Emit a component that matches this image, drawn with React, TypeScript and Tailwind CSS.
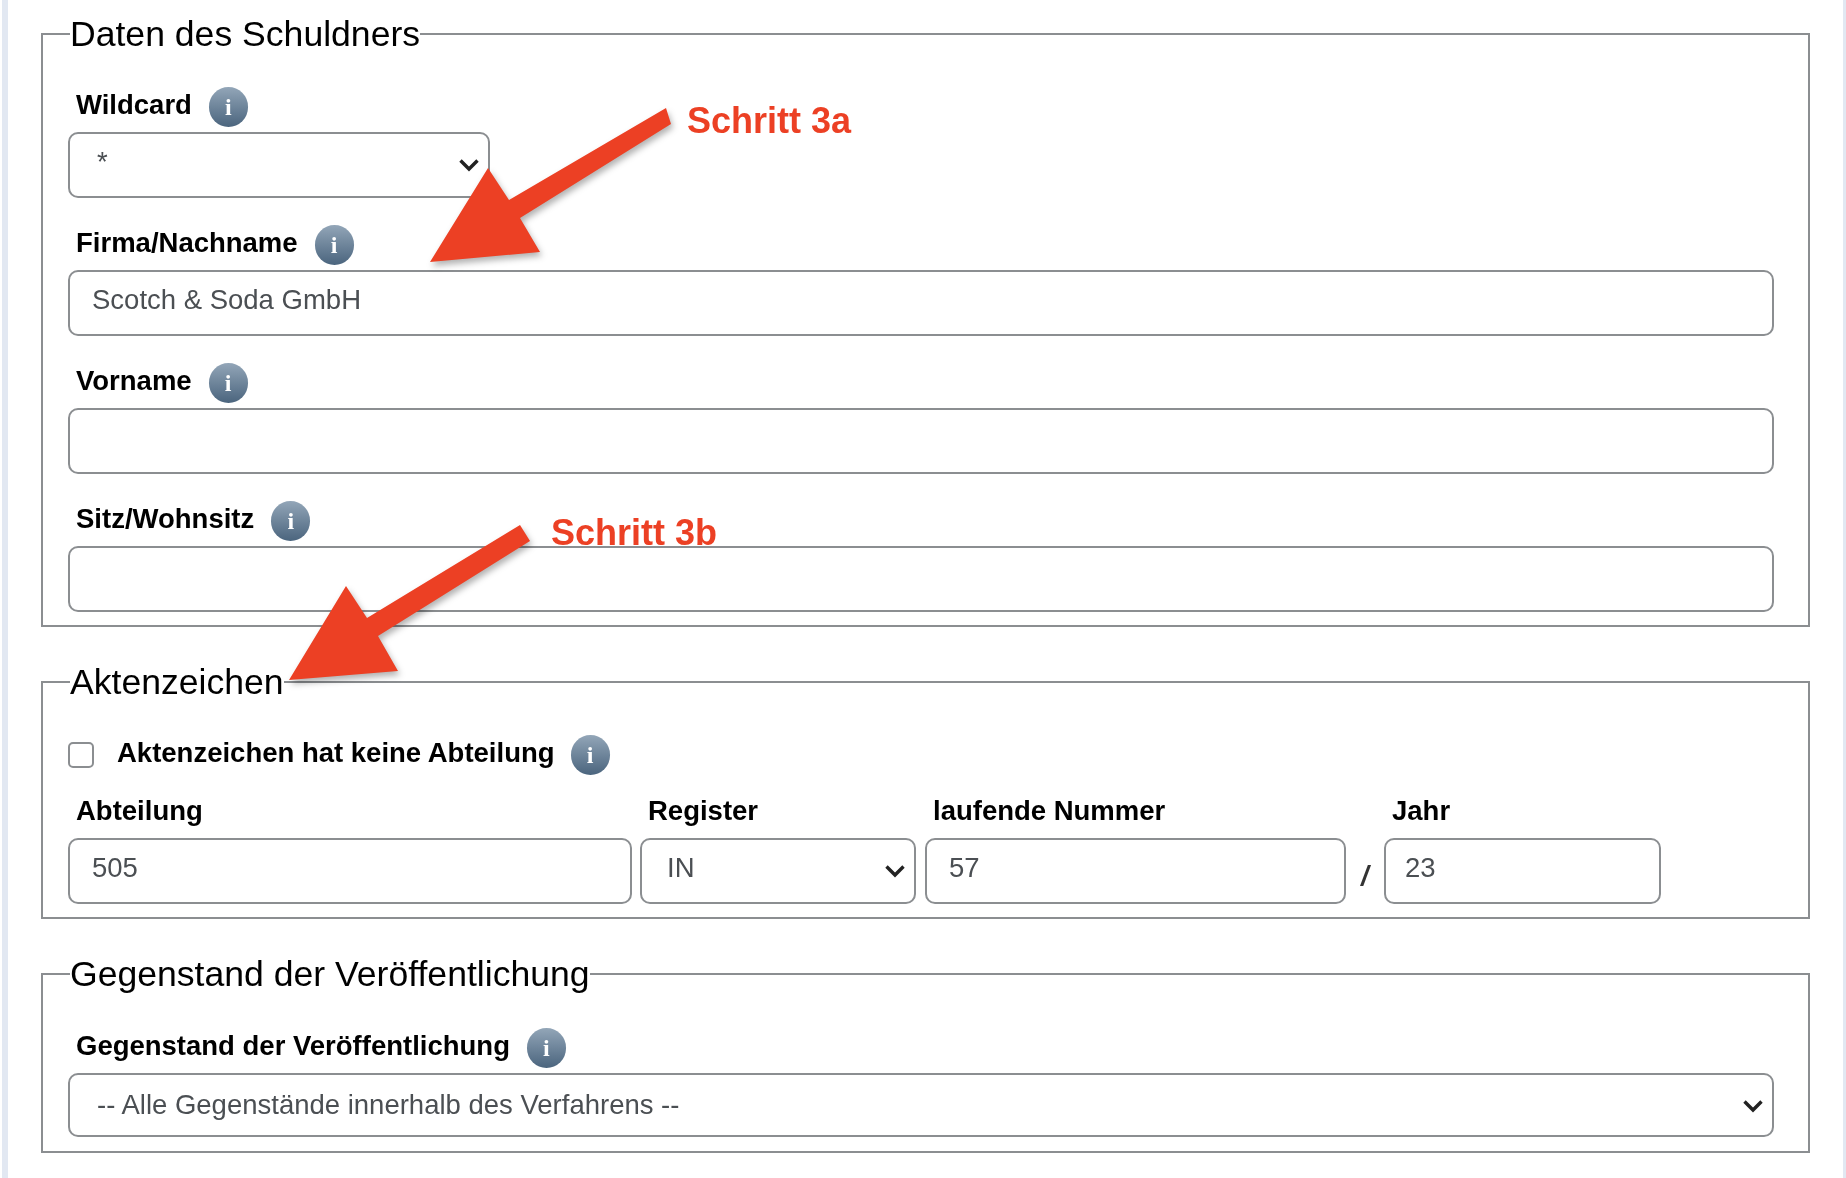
import type { ReactNode } from 'react';

const Info = () => (
  <span className="flex h-[40px] w-[39px] shrink-0 items-center justify-center rounded-full bg-gradient-to-b from-[#93a6b8] to-[#4b657e] font-['Liberation_Serif',serif] text-[24px] leading-none font-bold text-white">
    i
  </span>
);

const Label = ({ children, info = false }: { children: ReactNode; info?: boolean }) => (
  <div className="mb-[5px] flex h-[40px] items-center gap-[17px] pl-[8px]">
    <span className="-mt-[4px] text-[27.5px] font-bold text-black">{children}</span>
    {info && <Info />}
  </div>
);

const TextInput = ({ value = '', className = '' }: { value?: string; className?: string }) => (
  <input
    type="text"
    readOnly
    value={value}
    className={`h-[66px] rounded-[10px] border-2 border-[#8b8e91] bg-white px-[22px] pb-[6px] text-[27.5px] text-[#4b4f53] outline-none ${className}`}
  />
);

const Select = ({ value, className = '' }: { value: string; className?: string }) => (
  <div className={`relative ${className}`}>
    <select
      value={value}
      onChange={() => {}}
      className="h-[66px] w-full appearance-none rounded-[10px] border-2 border-[#8b8e91] bg-white pr-[40px] pb-[6px] pl-[27px] text-[27.5px] text-[#4b4f53] outline-none"
    >
      <option>{value}</option>
    </select>
    <svg className="pointer-events-none absolute top-[26px] right-[10px] h-[14px] w-[22px]" viewBox="0 0 22 14" fill="none">
      <path d="M2.5 2.5 L11 11 L19.5 2.5" stroke="#222" strokeWidth="3.4" />
    </svg>
  </div>
);

const Legend = ({ children }: { children: ReactNode }) => (
  <legend className="ml-[2px] h-[40px] text-[35.6px] leading-[40px] text-black">{children}</legend>
);

const Arrows = () => (
  <svg className="pointer-events-none absolute inset-0 h-full w-full" viewBox="0 0 1846 1178">
    <polygon
      points="430,262 488,168 509,200 666,108 671,124 520,218 540,252"
      fill="#ec4024"
      className="drop-shadow-[2px_4px_3px_rgba(0,0,0,0.3)]"
    />
    <polygon
      points="289,680 346,586 367,618 520,525 530,541 378,636 398,671"
      fill="#ec4024"
      className="drop-shadow-[2px_4px_3px_rgba(0,0,0,0.3)]"
    />
  </svg>
);

export default function App() {
  return (
    <div className="relative flex h-[1178px] w-full overflow-hidden bg-white pl-[2px] font-['Liberation_Sans',Arial,sans-serif] blur-[0.6px]">
      <div className="w-[6px] shrink-0 bg-[#e2e8f2]" />

      <main className="flex-1 pt-[14px] pr-[33px] pl-[33px]">
        <fieldset className="border-2 border-[#8b8e91] pr-[34px] pb-[13px] pl-[25px]">
          <Legend>Daten des Schuldners</Legend>
          <div className="flex flex-col gap-[27px] pt-[33px]">
            <div>
              <Label info>Wildcard</Label>
              <Select value="*" className="w-[422px]" />
            </div>
            <div>
              <Label info>Firma/Nachname</Label>
              <TextInput value="Scotch & Soda GmbH" className="w-full" />
            </div>
            <div>
              <Label info>Vorname</Label>
              <TextInput className="w-full" />
            </div>
            <div>
              <Label info>Sitz/Wohnsitz</Label>
              <TextInput className="w-full" />
            </div>
          </div>
        </fieldset>

        <fieldset className="mt-[35px] border-2 border-[#8b8e91] pr-[34px] pb-[13px] pl-[25px]">
          <Legend>Aktenzeichen</Legend>
          <div className="mt-[33px] mb-[18px] flex h-[40px] items-center">
            <span className="h-[26px] w-[26px] rounded-[5px] border-2 border-[#8b8e91] bg-white" />
            <span className="-mt-[4px] ml-[23px] text-[27.5px] font-bold text-black">Aktenzeichen hat keine Abteilung</span>
            <span className="ml-[16px]">
              <Info />
            </span>
          </div>
          <div className="flex items-start">
            <div className="w-[564px]">
              <Label>Abteilung</Label>
              <TextInput value="505" className="w-full" />
            </div>
            <div className="ml-[8px] w-[276px]">
              <Label>Register</Label>
              <Select value="IN" className="w-full [&_select]:pl-[25px]" />
            </div>
            <div className="ml-[9px] w-[421px]">
              <Label>laufende Nummer</Label>
              <TextInput value="57" className="w-full" />
            </div>
            <span className="mt-[62px] w-[38px] pl-[15px] text-[27.5px] font-bold text-[#333] italic">/</span>
            <div className="w-[277px]">
              <Label>Jahr</Label>
              <TextInput value="23" className="w-full pl-[19px]" />
            </div>
          </div>
        </fieldset>

        <fieldset className="mt-[35px] border-2 border-[#8b8e91] pr-[34px] pb-[14px] pl-[25px]">
          <Legend>Gegenstand der Veröffentlichung</Legend>
          <div className="pt-[34px]">
            <Label info>Gegenstand der Veröffentlichung</Label>
            <Select value="-- Alle Gegenstände innerhalb des Verfahrens --" className="w-full [&_select]:h-[64px] [&_select]:pb-[1px]" />
          </div>
        </fieldset>
      </main>

      <div className="w-[3px] shrink-0 bg-[#e2e8f2]" />

      <Arrows />
      <span className="absolute top-[100px] left-[687px] text-[36px] leading-[42px] font-bold text-[#ec4024]">Schritt 3a</span>
      <span className="absolute top-[512px] left-[551px] text-[36px] leading-[42px] font-bold text-[#ec4024]">Schritt 3b</span>
    </div>
  );
}
